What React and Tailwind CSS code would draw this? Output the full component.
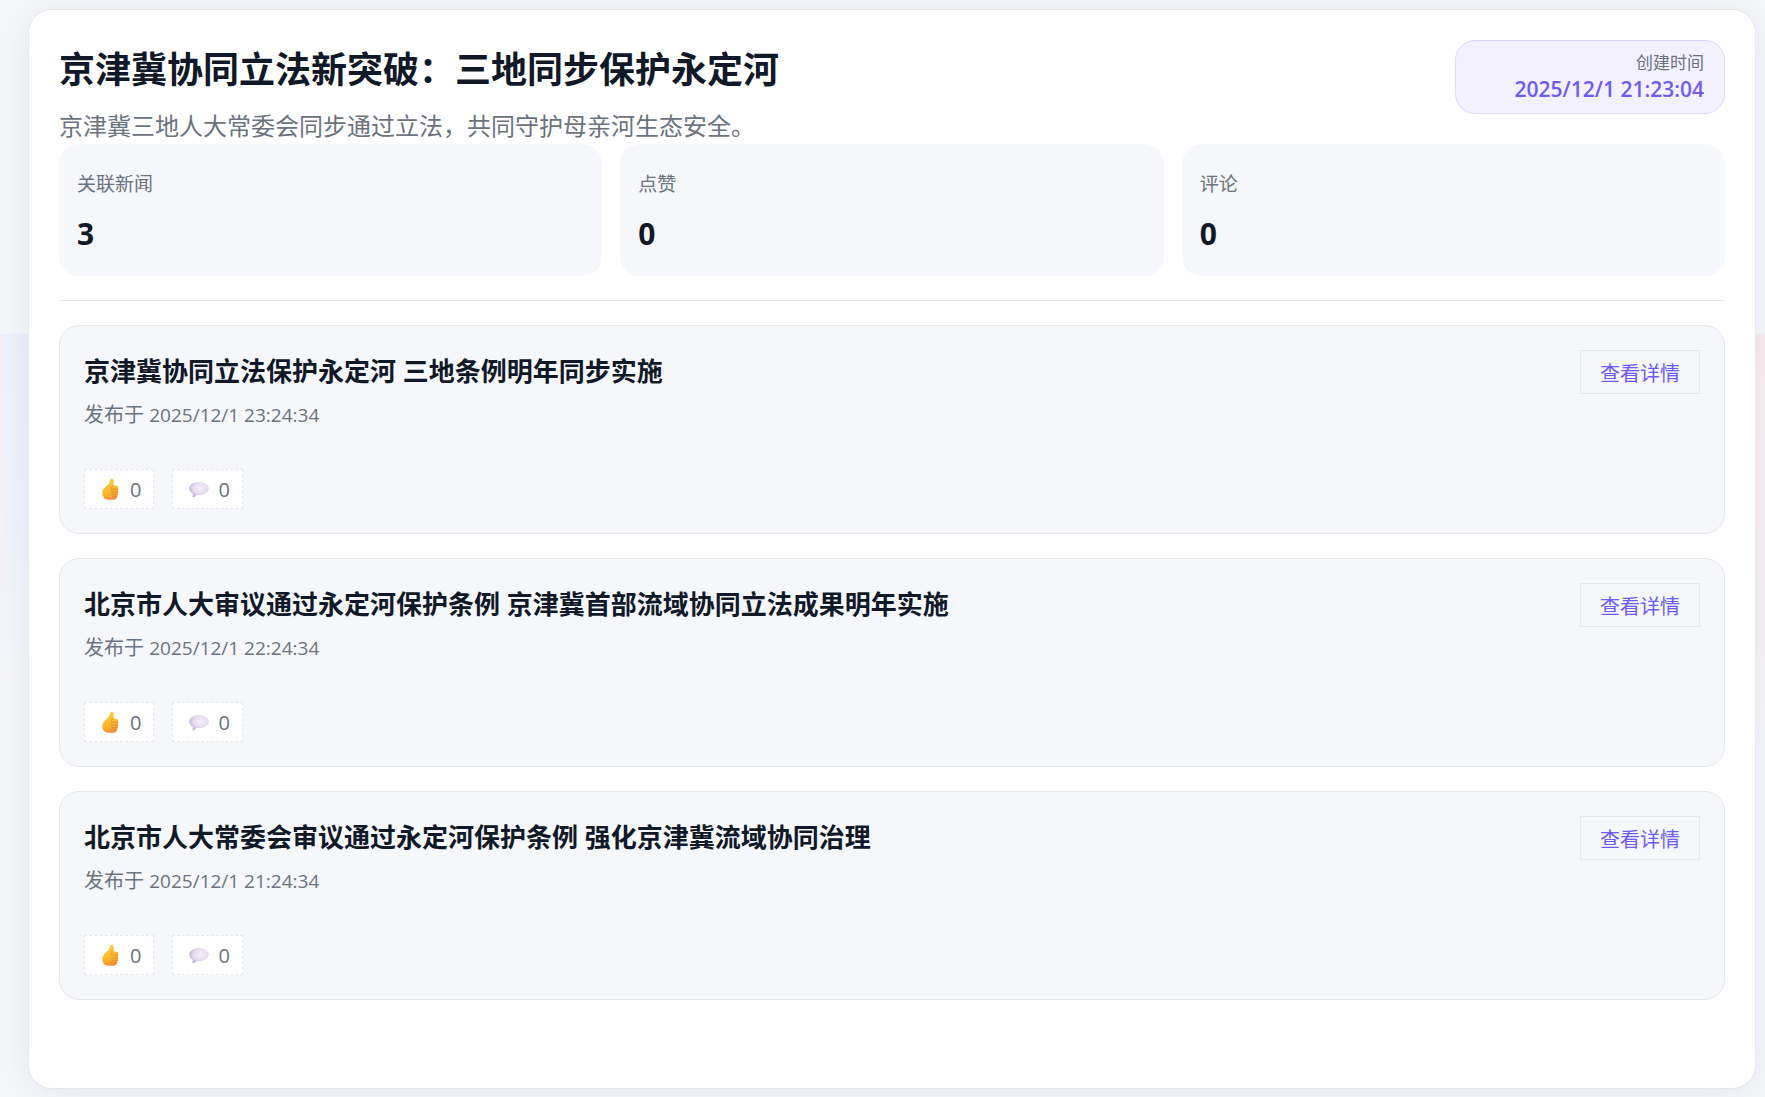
const stats = [
  { label: '关联新闻', value: 3 },
  { label: '点赞', value: 0 },
  { label: '评论', value: 0 },
];

const newsList = [
  {
    id: 1,
    title: '京津冀协同立法保护永定河 三地条例明年同步实施',
    publishedAt: '2025/12/1 23:24:34',
    likes: 0,
    comments: 0,
  },
  {
    id: 2,
    title: '北京市人大审议通过永定河保护条例 京津冀首部流域协同立法成果明年实施',
    publishedAt: '2025/12/1 22:24:34',
    likes: 0,
    comments: 0,
  },
  {
    id: 3,
    title: '北京市人大常委会审议通过永定河保护条例 强化京津冀流域协同治理',
    publishedAt: '2025/12/1 21:24:34',
    likes: 0,
    comments: 0,
  },
];

function ThumbIcon() {
  return (
    <svg viewBox="0 0 20 24" className="h-6 w-5" aria-hidden="true">
      <defs>
        <linearGradient id="thumb" x1="0.4" y1="0" x2="0.6" y2="1">
          <stop offset="0" stopColor="#ffcb3d" />
          <stop offset="0.65" stopColor="#fbb62c" />
          <stop offset="1" stopColor="#ee8a3a" />
        </linearGradient>
      </defs>
      <path
        d="M9.900.9c1.500-.7 2.800.4 2.900 2.300.1 1.500-.3 2.900-.3 4.200 1.600 0 3.200.1 4 .7.900.6 1 1.800.4 2.500.6.700.6 2 0 2.700.4.800.3 2-.4 2.600.3.900.1 1.900-.6 2.400.1 1.700-.6 3-2.300 3.200-2.300.4-5.100.4-7.200 0C3 21 1.300 18.700 1.300 15.400c0-3.100 1.400-5.100 3.600-6.900 1.900-1.600 3.500-3 3.900-5.300.1-1 .4-2 1.100-2.300z"
        fill="url(#thumb)"
      />
      <path
        d="M11.700 11.200h5M11.500 13.900h5.300M11.600 16.400h4.700M11.900 18.700h3.800"
        stroke="#dd8a22"
        strokeWidth="0.9"
        strokeLinecap="round"
      />
      <path
        d="M12.500 7.600c-1.700.4-2.400 1.800-1.800 3.500-.7.900-.5 2.100.1 2.800-.5.800-.4 1.800.3 2.500"
        fill="none"
        stroke="#e89c24"
        strokeWidth="0.9"
      />
    </svg>
  );
}

function BubbleIcon() {
  return (
    <svg viewBox="0 0 20 20" className="h-5 w-5" aria-hidden="true">
      <defs>
        <radialGradient id="bubble" cx="0.58" cy="0.42" r="0.62">
          <stop offset="0" stopColor="#f5f0fa" />
          <stop offset="0.6" stopColor="#e6dcf0" />
          <stop offset="1" stopColor="#c0aadb" />
        </radialGradient>
      </defs>
      <path
        d="M10 2.200c5.500 0 9.800 2.700 9.800 6.400 0 3.800-4.300 6.500-9.800 6.500-.7 0-1.500 0-2.200-.2-1 1-2.500 2-3.700 2.200-.6.100-.8-.4-.5-.9.300-.7.400-1.600.2-2.400C1.500 12.700.2 10.800.2 8.600c0-3.700 4.300-6.400 9.800-6.400z"
        fill="url(#bubble)"
      />
    </svg>
  );
}

function NewsCard({ news }) {
  return (
    <article className="rounded-[20px] border border-[#e5e7eb] bg-[#f5f7fb] p-6">
      <div className="flex items-start justify-between gap-6">
        <div>
          <h2 className="text-[26px] leading-[42px] font-bold text-[#111827]">{news.title}</h2>
          <p className="mt-[7px] text-[20px] leading-8 text-[#6b7280]">
            发布于 <time className="text-[19px]">{news.publishedAt}</time>
          </p>
        </div>
        <button
          type="button"
          className="h-11 shrink-0 border border-[#e5e7eb] px-[19px] pt-1 text-[20px] leading-8 text-[#6c5cf5]"
        >
          查看详情
        </button>
      </div>
      <div className="mt-[38px] flex gap-[18px]">
        <span className="flex h-10 items-center gap-[9px] border border-dashed border-[#e5e7eb] bg-white pt-[2px] pr-3 pl-4 text-[20px] text-[#6b7280]">
          <ThumbIcon />
          {news.likes}
        </span>
        <span className="flex h-10 items-center gap-[9px] border border-dashed border-[#e5e7eb] bg-white pt-[2px] pr-3 pl-4 text-[20px] text-[#6b7280]">
          <BubbleIcon />
          {news.comments}
        </span>
      </div>
    </article>
  );
}

export default function App() {
  return (
    <div className="relative min-h-screen bg-[#f5f7fb] pt-[9px] pr-[9px] pb-[9px] pl-7 font-['Open_Sans','Noto_Sans_CJK_SC',sans-serif]">
      {/* Soft colour glows behind the panel */}
      <div className="absolute top-[334px] left-0 h-[420px] w-[3px] bg-linear-to-b from-[#f6edef] to-[#f5f7fb]" />
      <div className="absolute top-[334px] left-[3px] h-[340px] w-1/2 bg-linear-to-b from-[#edf1fd] via-[#eef3fc] to-[#f5f7fb]" />
      <div className="absolute top-[334px] right-0 h-[420px] w-6 bg-linear-to-b from-[#f8eef1] via-[#f7f0f4] to-[#f5f7fb]" />

      <main className="relative min-h-[calc(100vh-18px)] rounded-3xl border border-[#e5e7eb] bg-white px-[30px] pt-[30px] pb-[88px] shadow-[0_4px_40px_rgba(15,23,42,0.07)]">
        {/* Header */}
        <header className="flex items-start justify-between gap-6">
          <div>
            <h1 className="text-[36px] leading-[60px] font-bold text-[#111827]">
              京津冀协同立法新突破：三地同步保护永定河
            </h1>
            <p className="mt-2 text-[24px] leading-9 text-[#6b7280]">
              京津冀三地人大常委会同步通过立法，共同守护母亲河生态安全。
            </p>
          </div>
          <div className="w-[270px] rounded-[20px] border border-[#ddd6fe] bg-[#f3f0ff] px-5 pt-2 pb-3 text-right">
            <p className="text-[17px] leading-7 text-[#6b7280]">创建时间</p>
            <p className="text-[21px] leading-6 font-semibold text-[#6c5cf5]">2025/12/1 21:23:04</p>
          </div>
        </header>

        {/* Stats */}
        <section className="grid grid-cols-3 gap-[18px]">
          {stats.map((stat) => (
            <div key={stat.label} className="h-[132px] rounded-[20px] bg-[#f5f7fb] px-[18px] py-6">
              <p className="text-[19px] leading-8 text-[#6b7280]">{stat.label}</p>
              <p className="mt-2 text-[30px] leading-[52px] font-bold text-[#111827]">{stat.value}</p>
            </div>
          ))}
        </section>

        {/* News list */}
        <section className="mt-6 flex flex-col gap-6 border-t border-[#e5e7eb] pt-6">
          {newsList.map((news) => (
            <NewsCard key={news.id} news={news} />
          ))}
        </section>
      </main>
    </div>
  );
}
